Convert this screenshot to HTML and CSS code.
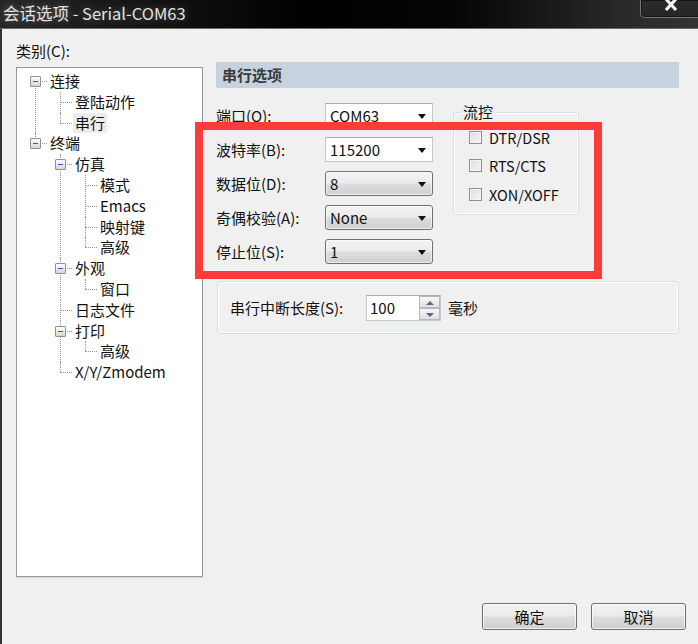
FILE: index.html
```html
<!DOCTYPE html>
<html lang="zh-CN">
<head>
  <meta charset="UTF-8">
  <title>会话选项 - Serial-COM63</title>
  <link rel="stylesheet" href="styles.css">
</head>
<body>

  <div class="titlebar">
    <span class="title">会话选项 - Serial-COM63</span>
    <div class="close">
      <svg width="16" height="13" viewBox="0 0 16 13">
        <path d="M3 -1 L13 10 M13 -1 L3 10" stroke="#f4f4f4" stroke-width="3.2" fill="none"/>
      </svg>
    </div>
  </div>

  <div class="client">
    <div class="main">

      <div class="category">
        <div class="cat-label">类别(C):</div>
        <div class="tree">
          <ul class="root">
            <li><span class="exp"></span><span class="node">连接</span>
              <ul>
                <li><span class="node">登陆动作</span></li>
                <li><span class="node selected">串行</span></li>
              </ul>
            </li>
            <li><span class="exp"></span><span class="node">终端</span>
              <ul>
                <li><span class="exp"></span><span class="node">仿真</span>
                  <ul>
                    <li><span class="node">模式</span></li>
                    <li><span class="node">Emacs</span></li>
                    <li><span class="node">映射键</span></li>
                    <li><span class="node">高级</span></li>
                  </ul>
                </li>
                <li><span class="exp"></span><span class="node">外观</span>
                  <ul>
                    <li><span class="node">窗口</span></li>
                  </ul>
                </li>
                <li><span class="node">日志文件</span></li>
                <li><span class="exp"></span><span class="node">打印</span>
                  <ul>
                    <li><span class="node">高级</span></li>
                  </ul>
                </li>
                <li><span class="node">X/Y/Zmodem</span></li>
              </ul>
            </li>
          </ul>
        </div>
      </div>

      <div class="options">
        <div class="pane-title">串行选项</div>

        <div class="serial">
          <div class="fields">
            <div class="field"><span class="lbl">端口(O):</span><div class="combo edit">COM63<span class="arrow"></span></div></div>
            <div class="field"><span class="lbl">波特率(B):</span><div class="combo edit">115200<span class="arrow"></span></div></div>
            <div class="field"><span class="lbl">数据位(D):</span><div class="combo list">8<span class="arrow"></span></div></div>
            <div class="field"><span class="lbl">奇偶校验(A):</span><div class="combo list">None<span class="arrow"></span></div></div>
            <div class="field"><span class="lbl">停止位(S):</span><div class="combo list">1<span class="arrow"></span></div></div>
          </div>

          <fieldset class="flow">
            <legend>流控</legend>
            <div class="check"><span class="box"></span>DTR/DSR</div>
            <div class="check"><span class="box"></span>RTS/CTS</div>
            <div class="check"><span class="box"></span>XON/XOFF</div>
          </fieldset>
        </div>

        <div class="break">
          <span class="break-lbl">串行中断长度(S):</span>
          <div class="spin">
            <span class="spin-val">100</span>
            <div class="spin-btns">
              <span class="up"></span>
              <span class="down"></span>
            </div>
          </div>
          <span class="unit">毫秒</span>
        </div>
      </div>

    </div>

    <div class="buttons">
      <button>确定</button>
      <button>取消</button>
    </div>
  </div>

  <div class="mark"></div>

</body>
</html>
```

FILE: styles.css
```css
html, body {
  margin: 0;
  height: 100%;
}
body {
  background: #f0f0f0;
  font-family: "Noto Sans CJK SC", "Noto Sans", sans-serif;
  font-size: 15px;
  color: #111;
  overflow: hidden;
}

/* window caption */
.titlebar {
  height: 28px;
  display: flex;
  align-items: flex-start;
  background: linear-gradient(90deg, #262626 0%, #101010 25%, #000 45%, #050505 65%, #2a2a2a 90%, #333 100%);
  border-bottom: 1px solid #6c6c6c;
}
.title {
  padding-left: 3px;
  line-height: 26px;
  font-size: 16.5px;
  color: #e2e2e2;
  text-shadow: 0 0 8px rgba(255,255,255,0.35);
}
.close {
  margin-left: auto;
  margin-right: -4px;
  width: 62px;
  height: 18px;
  border: 1px solid #767676;
  border-top: none;
  border-radius: 0 0 0 5px;
  box-shadow: inset 0 0 0 1px #151515;
  background: linear-gradient(#2c2c2c, #252525);
  padding-left: 22px;
  box-sizing: border-box;
}
.close svg {
  display: block;
}

/* client area */
.client {
  height: 615px;
  border-left: 2px solid #333;
  display: flex;
  flex-direction: column;
}
.main {
  display: flex;
  gap: 13px;
  padding: 13px 0 0 14px;
}

/* category tree */
.category {
  width: 187px;
}
.cat-label {
  line-height: 18px;
  margin-bottom: 7px;
}
.tree {
  height: 510px;
  box-sizing: border-box;
  background: #fff;
  border: 1px solid #9297a0;
  box-shadow: 0 1px 0 #d8d8d8;
}
.tree ul {
  list-style: none;
  margin: 0;
  padding: 0;
}
.tree .root {
  margin-left: 18px;
  padding-top: 3px;
}
.tree li {
  position: relative;
  padding-left: 13px;
  line-height: 20.8px;
}
.tree li::before {
  content: "";
  position: absolute;
  left: 0;
  top: 10px;
  width: 12px;
  border-top: 1px dotted #999;
}
.tree li::after {
  content: "";
  position: absolute;
  left: 0;
  top: 0;
  bottom: 0;
  border-left: 1px dotted #999;
}
.tree li:last-child::after {
  bottom: auto;
  height: 10px;
}
.tree .root > li:first-child::after {
  top: 10px;
  height: auto;
  bottom: 0;
}
.tree li ul {
  margin-left: 12px;
}
.node {
  display: inline-block;
  padding: 0 2px;
  color: #111;
}
.node.selected {
  background: #ececec;
}
.exp {
  position: absolute;
  left: -5px;
  top: 5px;
  width: 11px;
  height: 11px;
  box-sizing: border-box;
  border: 1px solid #909090;
  border-radius: 1px;
  background: linear-gradient(#fdfdfd, #d6d6d6);
  z-index: 1;
}
.exp::after {
  content: "";
  position: absolute;
  left: 2px;
  top: 4px;
  width: 5px;
  height: 1px;
  background: #3d5c9c;
}

/* serial options pane */
.options {
  width: 463px;
  margin-top: 20px;
}
.pane-title {
  height: 26px;
  line-height: 26px;
  padding-left: 6px;
  background: #c6d2de;
  font-weight: bold;
  color: #3a3a3a;
}
.serial {
  display: flex;
  gap: 20px;
  margin-top: 15px;
}
.fields {
  display: flex;
  flex-direction: column;
  gap: 9px;
}
.field {
  display: flex;
  align-items: center;
  height: 25px;
}
.lbl {
  width: 109px;
}
.combo {
  position: relative;
  width: 108px;
  height: 25px;
  box-sizing: border-box;
  padding-left: 4px;
  line-height: 23px;
}
.combo.edit {
  background: #fff;
  border: 1px solid #c5c8cf;
  border-top-color: #abadb3;
}
.combo.list {
  border: 1px solid #707070;
  border-radius: 3px;
  background: linear-gradient(#f3f3f3 0%, #ebebeb 48%, #dddddd 52%, #d0d0d0 100%);
  box-shadow: inset 0 0 0 1px rgba(255,255,255,0.6);
}
.arrow {
  position: absolute;
  right: 6px;
  top: 10px;
  border-left: 4px solid transparent;
  border-right: 4px solid transparent;
  border-top: 5px solid #111;
}

/* flow control group */
.flow {
  width: 126px;
  height: 112px;
  box-sizing: border-box;
  margin: 0;
  padding: 6px 0 0 15px;
  border: 1px solid #d5dfe5;
  border-radius: 3px;
  box-shadow: inset 0 0 0 1px #fff;
}
.flow legend {
  margin-left: -8px;
  padding: 0 2px;
  line-height: 18px;
}
.check {
  display: flex;
  align-items: center;
  gap: 7px;
  height: 20px;
  margin-bottom: 8.5px;
  font-size: 14.5px;
}
.box {
  width: 13px;
  height: 13px;
  box-sizing: border-box;
  border: 1px solid #8f8f8f;
  background: linear-gradient(135deg, #dcdcdc, #f6f6f6);
  box-shadow: inset 0 0 0 1px #f4f4f4;
}

/* serial break group */
.break {
  display: flex;
  align-items: center;
  height: 53px;
  box-sizing: border-box;
  margin: 17px 0 0 1px;
  padding-left: 12px;
  border: 1px solid #d5dfe5;
  border-radius: 3px;
  box-shadow: inset 0 0 0 1px #fff;
}
.break-lbl {
  width: 136px;
}
.spin {
  display: flex;
  width: 75px;
  height: 26px;
  box-sizing: border-box;
  background: #fff;
  border: 1px solid #c5c8cf;
  border-top-color: #abadb3;
}
.spin-val {
  flex: 1;
  padding-left: 3px;
  line-height: 24px;
}
.spin-btns {
  width: 21px;
  display: flex;
  flex-direction: column;
}
.spin-btns span {
  flex: 1;
  position: relative;
  border: 1px solid #b8b8b8;
  background: linear-gradient(#f6f6f6, #e0e0e0);
}
.spin-btns span::after {
  content: "";
  position: absolute;
  left: 6px;
  top: 4px;
  border-left: 4px solid transparent;
  border-right: 4px solid transparent;
}
.spin-btns .up::after {
  border-bottom: 4px solid #55698f;
}
.spin-btns .down::after {
  border-top: 4px solid #55698f;
}
.unit {
  margin-left: 7px;
}

/* dialog buttons */
.buttons {
  display: flex;
  justify-content: flex-end;
  gap: 14px;
  padding-right: 12px;
  margin-top: 26px;
}
button {
  width: 95px;
  height: 27px;
  border: 1px solid #707070;
  border-radius: 3px;
  background: linear-gradient(#f2f2f2 0%, #ebebeb 48%, #dddddd 52%, #cfcfcf 100%);
  box-shadow: inset 0 0 0 1px rgba(255,255,255,0.7);
  font-family: inherit;
  font-size: 15px;
  color: #111;
  padding: 0;
}

/* red highlight frame drawn over the form */
.mark {
  position: absolute;
  left: 195px;
  top: 122px;
  width: 407px;
  height: 157px;
  box-sizing: border-box;
  border: 8px solid #fd3b3b;
}
```
